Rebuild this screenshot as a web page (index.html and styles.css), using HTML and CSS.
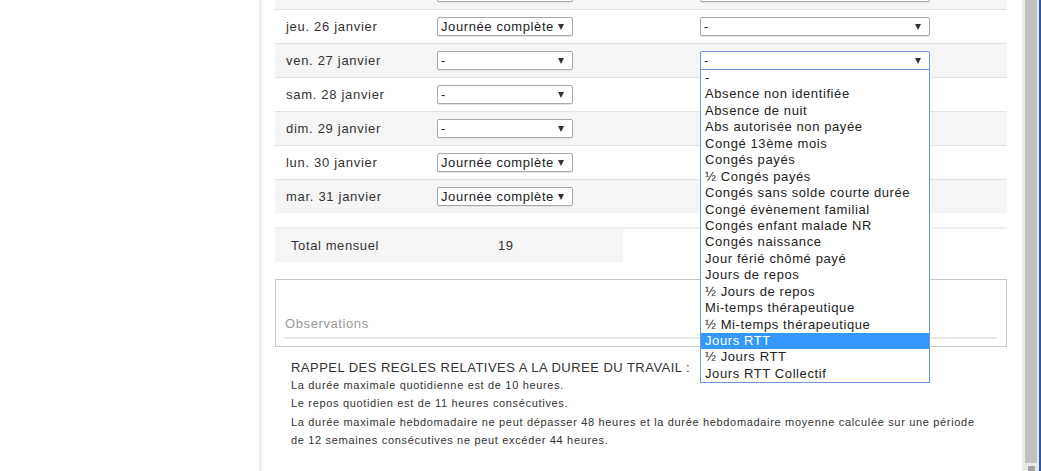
FILE: index.html
```html
<!DOCTYPE html>
<html lang="fr">
<head>
    <meta charset="UTF-8">
    <title>Saisie mensuelle</title>
    <link rel="stylesheet" href="styles.css">
</head>
<body>
    <div class="page">
        <div class="side"></div>
        <div class="shadow"></div>
        <div class="panel">
            <div class="days">
                <div class="day">
                    <div class="date"></div>
                    <div class="cell"><div class="select small"><i class="arrow"></i></div></div>
                    <div class="cell"><div class="select wide"><i class="arrow"></i></div></div>
                </div>
                <div class="day">
                    <div class="date">jeu. 26 janvier</div>
                    <div class="cell"><div class="select small"><span>Journée complète</span><i class="arrow"></i></div></div>
                    <div class="cell"><div class="select wide"><span>-</span><i class="arrow"></i></div></div>
                </div>
                <div class="day">
                    <div class="date">ven. 27 janvier</div>
                    <div class="cell"><div class="select small"><span>-</span><i class="arrow"></i></div></div>
                    <div class="cell">
                        <div class="select wide focus"><span>-</span><i class="arrow"></i>
                            <ul class="options">
                                <li>-</li>
                                <li>Absence non identifiée</li>
                                <li>Absence de nuit</li>
                                <li>Abs autorisée non payée</li>
                                <li>Congé 13ème mois</li>
                                <li>Congés payés</li>
                                <li>½ Congés payés</li>
                                <li>Congés sans solde courte durée</li>
                                <li>Congé évènement familial</li>
                                <li>Congés enfant malade NR</li>
                                <li>Congés naissance</li>
                                <li>Jour férié chômé payé</li>
                                <li>Jours de repos</li>
                                <li>½ Jours de repos</li>
                                <li>Mi-temps thérapeutique</li>
                                <li>½ Mi-temps thérapeutique</li>
                                <li class="active">Jours RTT</li>
                                <li>½ Jours RTT</li>
                                <li>Jours RTT Collectif</li>
                            </ul>
                        </div>
                    </div>
                </div>
                <div class="day">
                    <div class="date">sam. 28 janvier</div>
                    <div class="cell"><div class="select small"><span>-</span><i class="arrow"></i></div></div>
                    <div class="cell"></div>
                </div>
                <div class="day">
                    <div class="date">dim. 29 janvier</div>
                    <div class="cell"><div class="select small"><span>-</span><i class="arrow"></i></div></div>
                    <div class="cell"></div>
                </div>
                <div class="day">
                    <div class="date">lun. 30 janvier</div>
                    <div class="cell"><div class="select small"><span>Journée complète</span><i class="arrow"></i></div></div>
                    <div class="cell"></div>
                </div>
                <div class="day">
                    <div class="date">mar. 31 janvier</div>
                    <div class="cell"><div class="select small"><span>Journée complète</span><i class="arrow"></i></div></div>
                    <div class="cell"></div>
                </div>
            </div>

            <div class="total">
                <div class="total-box">
                    <span class="total-label">Total mensuel</span>
                    <span class="total-value">19</span>
                </div>
            </div>

            <div class="observations">
                <div class="obs-label">Observations</div>
            </div>

            <div class="rappel">
                <div class="rappel-title">RAPPEL DES REGLES RELATIVES A LA DUREE DU TRAVAIL :</div>
                <p>La durée maximale quotidienne est de 10 heures.</p>
                <p>Le repos quotidien est de 11 heures consécutives.</p>
                <p>La durée maximale hebdomadaire ne peut dépasser 48 heures et la durée hebdomadaire moyenne calculée sur une période de 12 semaines consécutives ne peut excéder 44 heures.</p>
            </div>
        </div>
        <div class="scrollbar">
            <div class="thumb"></div>
            <div class="down"></div>
        </div>
        <div class="edge"></div>
    </div>
</body>
</html>
```

FILE: styles.css
```css
*{
    box-sizing: border-box;
}
body{
    margin: 0;
    background-color: #fff;
    font-family: "Liberation Sans", Arial, sans-serif;
    color: #333;
    overflow: hidden;
}
div.page{
    display: flex;
    height: 471px;
    overflow: hidden;
}
div.side{
    width: 259px;
    flex: none;
}
div.shadow{
    width: 5px;
    flex: none;
    background: linear-gradient(to right, #e6e6e6, #fff);
}
div.panel{
    width: 758px;
    flex: none;
    padding: 0 15px 0 11px;
}
div.days{
    margin-top: -25px;
}
div.day{
    display: grid;
    grid-template-columns: 162px 263px 1fr;
    height: 34px;
    border-top: 1px solid #e2e2e2;
    align-items: start;
}
div.day:nth-child(odd){
    background-color: #f5f5f5;
}
div.date{
    padding: 9px 0 0 11px;
    font-size: 13px;
    letter-spacing: 0.7px;
    line-height: 15px;
}
div.cell{
    padding-top: 7px;
}
div.select{
    position: relative;
    height: 19px;
    background-color: #fff;
    border: 1px solid #a9a9a9;
    border-radius: 2px;
    box-shadow: 0 1px 0 #e4e4e4;
    font-size: 13px;
    letter-spacing: 0.6px;
    line-height: 17px;
    padding-left: 3px;
    color: #222;
}
div.select.small{
    width: 136px;
}
div.select.wide{
    width: 230px;
}
div.select.focus{
    border-color: #6f97d8;
    border-radius: 2px 2px 0 0;
}
i.arrow{
    position: absolute;
    right: 8px;
    top: 6px;
    width: 0;
    height: 0;
    border-left: 3.5px solid transparent;
    border-right: 3.5px solid transparent;
    border-top: 6px solid #333;
}
ul.options{
    position: absolute;
    left: -1px;
    top: 17px;
    width: 230px;
    margin: 0;
    padding: 0;
    list-style: none;
    background-color: #fff;
    border: 1px solid #6f97d8;
    z-index: 5;
}
ul.options li{
    height: 16.45px;
    line-height: 16.45px;
    padding-left: 4px;
    font-size: 13px;
    letter-spacing: 0.6px;
    color: #222;
    white-space: nowrap;
}
ul.options li.active{
    background-color: #3399ff;
    color: #fff;
}
div.total{
    margin-top: 14px;
    border-top: 2px solid #eeeeee;
}
div.total-box{
    width: 348px;
    height: 33px;
    background-color: #f5f5f5;
    display: flex;
    align-items: center;
    font-size: 13px;
    letter-spacing: 0.6px;
}
span.total-label{
    width: 223px;
    padding-left: 16px;
}
div.observations{
    margin-top: 17px;
    border: 1px solid #c8c8c8;
    height: 68px;
    padding: 36px 9px 0 8px;
}
div.obs-label{
    color: #999;
    font-size: 13px;
    letter-spacing: 0.6px;
    line-height: 15px;
    padding: 0 0 6px 1px;
    border-bottom: 2px solid #e8e8e8;
}
div.rappel{
    padding: 13px 0 0 16px;
}
div.rappel-title{
    font-size: 13px;
    line-height: 16px;
    letter-spacing: 0.47px;
}
div.rappel p{
    margin: 0;
    font-size: 11px;
    line-height: 18.4px;
    letter-spacing: 0.67px;
    width: 700px;
}
div.scrollbar{
    width: 17px;
    flex: none;
    background-color: #e9e9e9;
    padding: 0 2px 0 3px;
    display: flex;
    flex-direction: column;
}
div.thumb{
    height: 463px;
    background-color: #c1c1c1;
}
div.down{
    margin: 3px auto 0;
    width: 7px;
    height: 5px;
    background-color: #a3a3a3;
}
div.edge{
    width: 2px;
    flex: none;
    background-color: #2c5aa5;
}
```
